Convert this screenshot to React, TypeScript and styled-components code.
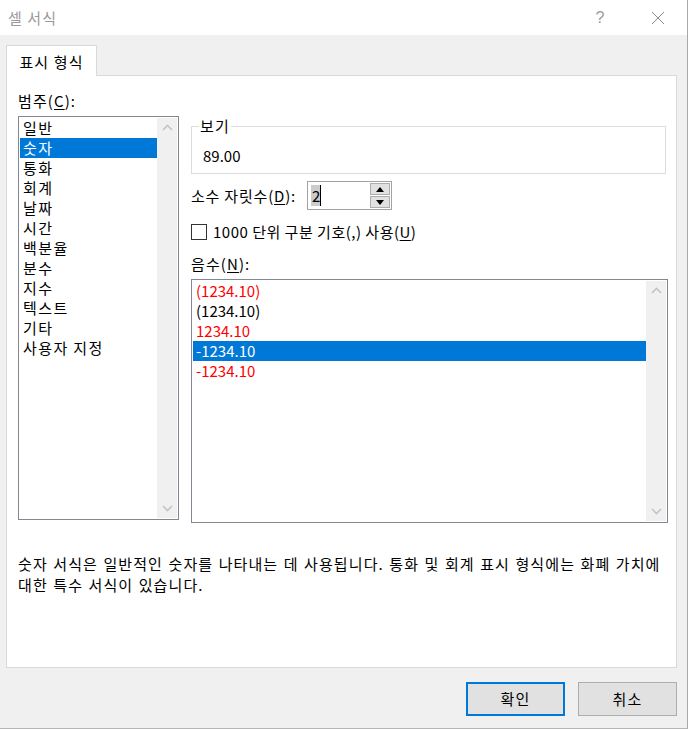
import React from 'react';
import styled, { createGlobalStyle } from 'styled-components';

const GlobalStyle = createGlobalStyle`
    body {
        margin: 0;
        background: #ffffff;
        font-family: "Noto Sans CJK KR", "Noto Sans", sans-serif;
        font-size: 15px;
        letter-spacing: 1.1px;
        color: #000000;
    }
`;

const Frame = styled.div`
    width: 688px;
    height: 729px;
    box-sizing: border-box;
    background: #f0f0f0;
    border-right: 1px solid #a9a9a9;
    border-bottom: 1px solid #b5b5b5;
    display: flex;
    flex-direction: column;
`;

const TitleBar = styled.div`
    height: 35px;
    background: #ffffff;
    display: flex;
    align-items: center;
    padding: 0 1px 0 8px;
    flex-shrink: 0;
`;

const Title = styled.div`
    color: #9a9a9a;
    font-size: 15px;
    line-height: 20px;
    flex: 1;
`;

const TitleButton = styled.div`
    width: 57px;
    height: 35px;
    display: flex;
    align-items: center;
    justify-content: center;
    color: #9a9a9a;
    font-family: "Liberation Sans", sans-serif;
    font-size: 16px;
`;

const Body = styled.div`
    padding: 10px 10px 0 6px;
    display: flex;
    flex-direction: column;
`;

const TabStrip = styled.div`
    display: flex;
    height: 31px;
    margin-bottom: -1px;
    position: relative;
    z-index: 1;
`;

const Tab = styled.div`
    width: 91px;
    box-sizing: border-box;
    border: 1px solid #d9d9d9;
    border-bottom: none;
    background: #ffffff;
    display: flex;
    align-items: center;
    justify-content: center;
    line-height: 20px;
    padding-top: 2px;
`;

const Panel = styled.div`
    height: 593px;
    box-sizing: border-box;
    border: 1px solid #d9d9d9;
    background: #ffffff;
    padding: 15px 8px 0 11px;
    display: flex;
    flex-direction: column;
`;

const Columns = styled.div`
    display: grid;
    grid-template-columns: 161px 477px;
    column-gap: 12px;
    align-items: start;
`;

const Column = styled.div`
    display: flex;
    flex-direction: column;
`;

const Label = styled.div<{ $mt?: number }>`
    line-height: 20px;
    height: 20px;
    margin-top: ${p => p.$mt ?? 0}px;
    white-space: nowrap;
`;

const Key = styled.span`
    text-decoration: underline;
    text-underline-offset: 2px;
`;

const ListBox = styled.div<{ $h: number; $mt: number }>`
    height: ${p => p.$h}px;
    margin-top: ${p => p.$mt}px;
    box-sizing: border-box;
    border: 1px solid #828790;
    padding: 1px;
    display: flex;
    background: #ffffff;
`;

const Items = styled.div<{ $numeric?: boolean }>`
    flex: 1;
    display: flex;
    flex-direction: column;
    letter-spacing: ${p => (p.$numeric ? '0' : '1.4px')};
`;

const Item = styled.div<{ $selected?: boolean; $red?: boolean }>`
    height: 20px;
    line-height: 20px;
    padding-left: 3px;
    white-space: nowrap;
    background: ${p => (p.$selected ? '#0078d7' : 'transparent')};
    color: ${p => (p.$selected ? '#ffffff' : p.$red ? '#ff0000' : '#000000')};
`;

const ScrollTrack = styled.div`
    width: 20px;
    background: #f0f0f0;
    display: flex;
    flex-direction: column;
    justify-content: space-between;
    align-items: center;
    padding: 6px 0;
    box-sizing: border-box;
`;

const GroupBox = styled.div`
    position: relative;
    width: 475px;
    height: 48px;
    box-sizing: border-box;
    margin-top: 35px;
    border: 1px solid #dcdcdc;
    padding: 19px 0 0 11px;
    line-height: 20px;
    letter-spacing: 0;
`;

const Legend = styled.span`
    position: absolute;
    top: -11px;
    left: 7px;
    padding: 0 1px;
    background: #ffffff;
    line-height: 20px;
    letter-spacing: 1.1px;
`;

const SpinRow = styled.div`
    display: flex;
    align-items: center;
    gap: 11px;
    margin-top: 7px;
    height: 29px;
    letter-spacing: 0.8px;
`;

const SpinBox = styled.div`
    width: 85px;
    height: 29px;
    box-sizing: border-box;
    border: 1px solid #a2a2a2;
    display: flex;
    background: #ffffff;
`;

const SpinField = styled.div`
    flex: 1;
    display: flex;
    align-items: center;
    padding-left: 3px;
    letter-spacing: 0;
`;

const Selected = styled.span`
    background: #cccccc;
    line-height: 21px;
    padding: 0 0 0 1px;
    border-right: 1px solid #000000;
`;

const SpinButtons = styled.div`
    width: 20px;
    display: flex;
    flex-direction: column;
    gap: 1px;
    padding: 1px 1px 1px 0;
`;

const SpinButton = styled.div`
    flex: 1;
    border: 1px solid #adadad;
    background: #e1e1e1;
    display: flex;
    align-items: center;
    justify-content: center;
`;

const CheckRow = styled.div`
    display: flex;
    align-items: center;
    gap: 6px;
    margin-top: 12px;
    height: 20px;
    line-height: 20px;
    letter-spacing: 0.5px;
`;

const CheckBox = styled.div`
    width: 16px;
    height: 16px;
    box-sizing: border-box;
    border: 1px solid #333333;
    background: #ffffff;
`;

const Description = styled.div`
    margin-top: 30px;
    line-height: 21px;
    letter-spacing: 1.1px;
    word-spacing: 1px;
    white-space: nowrap;
`;

const Footer = styled.div`
    display: flex;
    justify-content: flex-end;
    gap: 13px;
    padding: 14px 0 0 0;
`;

const Button = styled.div<{ $primary?: boolean }>`
    width: 99px;
    height: 34px;
    box-sizing: border-box;
    background: #e1e1e1;
    border: ${p => (p.$primary ? '2px solid #0078d7' : '1px solid #adadad')};
    display: flex;
    align-items: center;
    justify-content: center;
    line-height: 20px;
`;

const Chevron = ({ up }: { up?: boolean }) => (
    <svg width="11" height="7" viewBox="0 0 11 7">
        <path
            d={up ? 'M1 6 L5.5 1.5 L10 6' : 'M1 1 L5.5 5.5 L10 1'}
            fill="none"
            stroke="#c4c4c4"
            strokeWidth="1.6"
        />
    </svg>
);

const Triangle = ({ up }: { up?: boolean }) => (
    <svg width="8" height="5" viewBox="0 0 8 5">
        <path d={up ? 'M0 5 L4 0 L8 5 Z' : 'M0 0 L4 5 L8 0 Z'} fill="#000000" />
    </svg>
);

const Scrollbar = () => (
    <ScrollTrack>
        <Chevron up />
        <Chevron />
    </ScrollTrack>
);

const categories = ['일반', '숫자', '통화', '회계', '날짜', '시간', '백분율', '분수', '지수', '텍스트', '기타', '사용자 지정'];

const negatives = [
    { text: '(1234.10)', red: true },
    { text: '(1234.10)', red: false },
    { text: '1234.10', red: true },
    { text: '-1234.10', red: false },
    { text: '-1234.10', red: true },
];

export default function App() {
    return (
        <>
            <GlobalStyle />
            <Frame>
                <TitleBar>
                    <Title>셀 서식</Title>
                    <TitleButton>?</TitleButton>
                    <TitleButton>
                        <svg width="14" height="14" viewBox="0 0 14 14">
                            <path d="M1 1 L13 13 M13 1 L1 13" stroke="#8a8a8a" strokeWidth="1" />
                        </svg>
                    </TitleButton>
                </TitleBar>
                <Body>
                    <TabStrip>
                        <Tab>표시 형식</Tab>
                    </TabStrip>
                    <Panel>
                        <Columns>
                            <Column>
                                <Label>범주(<Key>C</Key>):</Label>
                                <ListBox $h={404} $mt={5}>
                                    <Items>
                                        {categories.map((c, i) => (
                                            <Item key={c} $selected={i === 1}>{c}</Item>
                                        ))}
                                    </Items>
                                    <Scrollbar />
                                </ListBox>
                            </Column>
                            <Column>
                                <GroupBox>
                                    <Legend>보기</Legend>
                                    89.00
                                </GroupBox>
                                <SpinRow>
                                    <span>소수 자릿수(<Key>D</Key>):</span>
                                    <SpinBox>
                                        <SpinField>
                                            <Selected>2</Selected>
                                        </SpinField>
                                        <SpinButtons>
                                            <SpinButton><Triangle up /></SpinButton>
                                            <SpinButton><Triangle /></SpinButton>
                                        </SpinButtons>
                                    </SpinBox>
                                </SpinRow>
                                <CheckRow>
                                    <CheckBox />
                                    <span>1000 단위 구분 기호(,) 사용(<Key>U</Key>)</span>
                                </CheckRow>
                                <Label $mt={12}>음수(<Key>N</Key>):</Label>
                                <ListBox $h={244} $mt={5}>
                                    <Items $numeric>
                                        {negatives.map((n, i) => (
                                            <Item key={i} $red={n.red} $selected={i === 3}>{n.text}</Item>
                                        ))}
                                    </Items>
                                    <Scrollbar />
                                </ListBox>
                            </Column>
                        </Columns>
                        <Description>
                            숫자 서식은 일반적인 숫자를 나타내는 데 사용됩니다. 통화 및 회계 표시 형식에는 화폐 가치에
                            <br />
                            대한 특수 서식이 있습니다.
                        </Description>
                    </Panel>
                    <Footer>
                        <Button $primary>확인</Button>
                        <Button>취소</Button>
                    </Footer>
                </Body>
            </Frame>
        </>
    );
}
